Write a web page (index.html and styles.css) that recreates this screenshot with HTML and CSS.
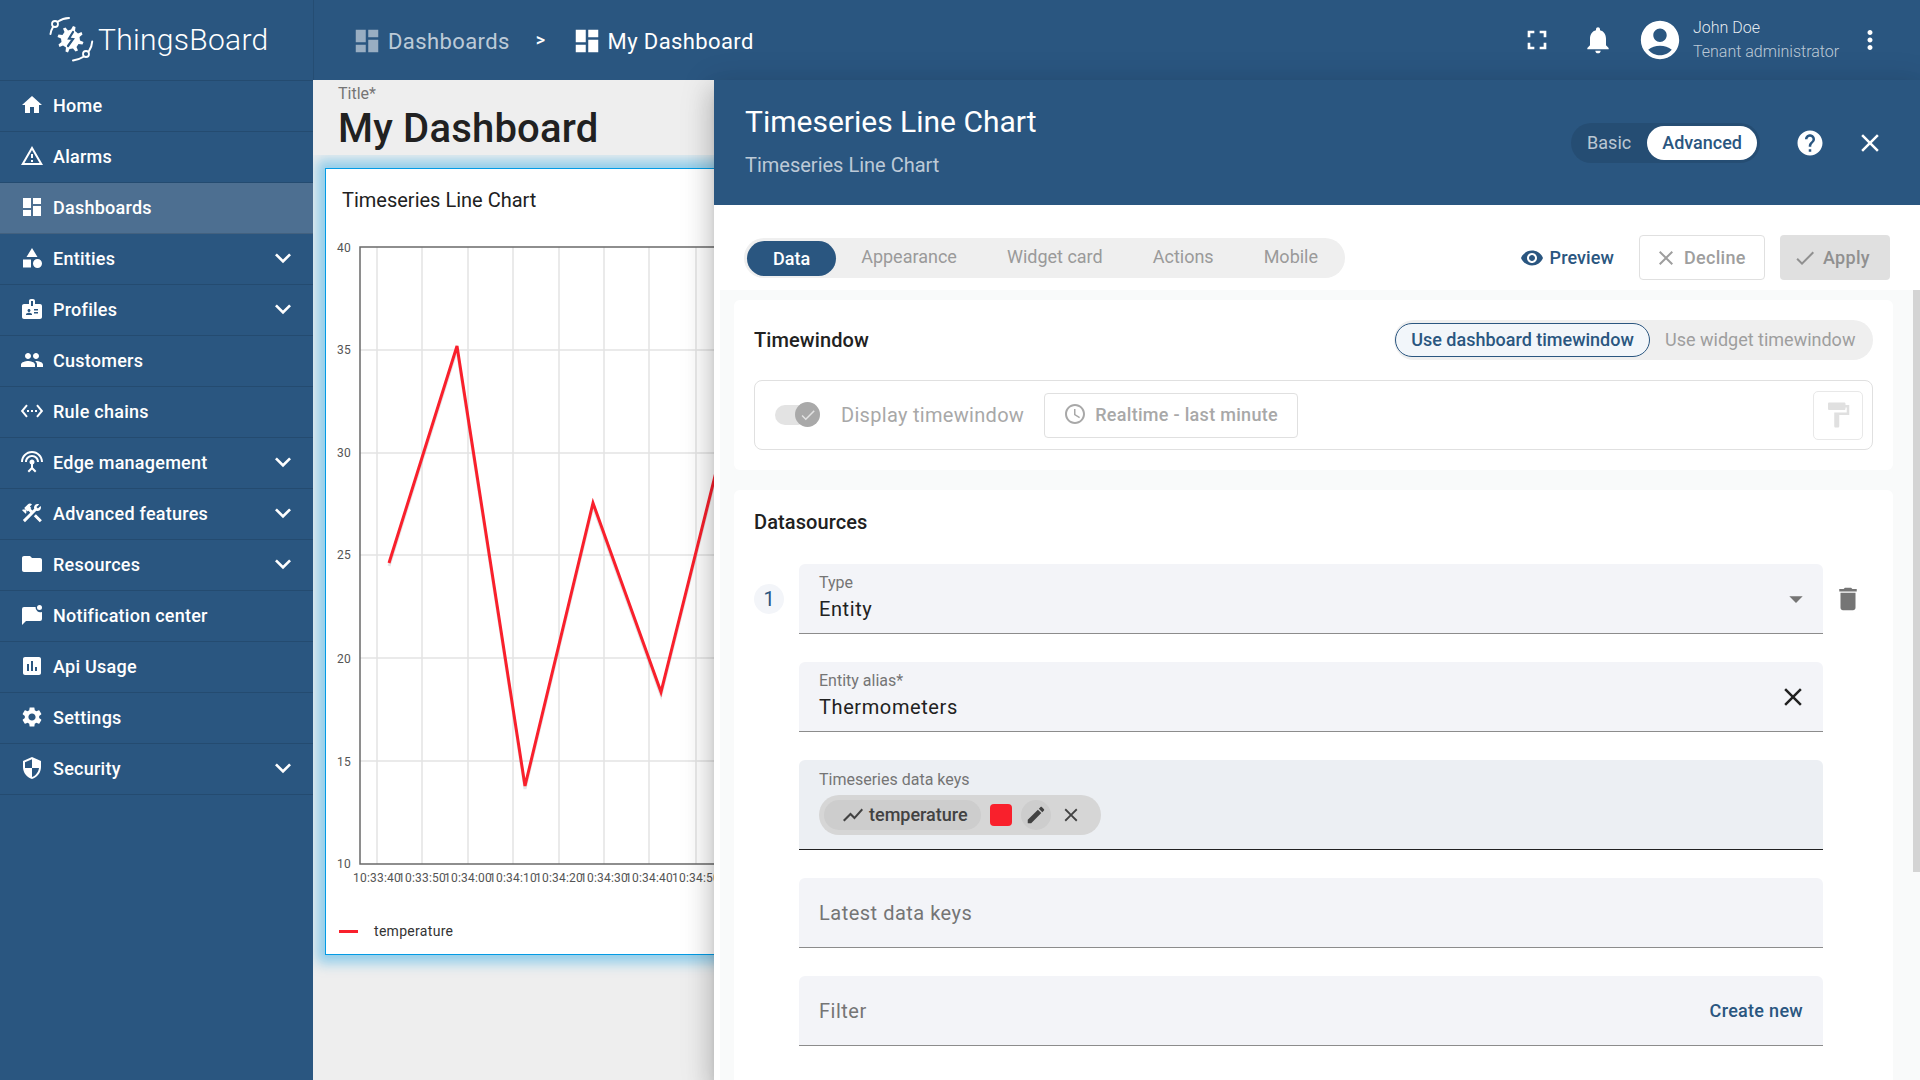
FILE: index.html
```html
<!DOCTYPE html>
<html lang="en">
<head>
  <meta charset="UTF-8" />
  <title>ThingsBoard | My Dashboard</title>
  <link rel="stylesheet" href="styles.css">
</head>
<body>

  <svg class="sprite" xmlns="http://www.w3.org/2000/svg">
    <symbol id="i-home" viewBox="0 0 24 24"><path d="M10 20v-6h4v6h5v-8h3L12 3 2 12h3v8z"/></symbol>
    <symbol id="i-warning" viewBox="0 0 24 24"><path d="M12 5.99L19.53 19H4.47L12 5.99M12 2L1 21h22L12 2zm1 14h-2v2h2v-2zm0-6h-2v4h2v-4z"/></symbol>
    <symbol id="i-dashboard" viewBox="0 0 24 24"><path d="M3 13h8V3H3v10zm0 8h8v-6H3v6zm10 0h8V11h-8v10zm0-18v6h8V3h-8z"/></symbol>
    <symbol id="i-category" viewBox="0 0 24 24"><path d="M12 2l-5.5 9h11zM17.5 13a4.5 4.5 0 1 0 0 9a4.5 4.5 0 1 0 0-9zM3 13.5h8v8H3z"/></symbol>
    <symbol id="i-badge" viewBox="0 0 24 24"><path d="M20 7h-5V4c0-1.1-.9-2-2-2h-2c-1.1 0-2 .9-2 2v3H4c-1.1 0-2 .9-2 2v11c0 1.1.9 2 2 2h16c1.1 0 2-.9 2-2V9c0-1.1-.9-2-2-2zM9 12c.83 0 1.5.67 1.5 1.5S9.83 15 9 15s-1.5-.67-1.5-1.5S8.17 12 9 12zm3 6H6v-.75c0-1 2-1.5 3-1.5s3 .5 3 1.5V18zm1-9h-2V4h2v5zm5 7.5h-4V15h4v1.5zm0-3h-4V12h4v1.5z"/></symbol>
    <symbol id="i-people" viewBox="0 0 24 24"><path d="M16 11c1.66 0 2.99-1.34 2.99-3S17.66 5 16 5c-1.66 0-3 1.34-3 3s1.34 3 3 3zm-8 0c1.66 0 2.99-1.34 2.99-3S9.66 5 8 5C6.34 5 5 6.34 5 8s1.34 3 3 3zm0 2c-2.33 0-7 1.17-7 3.5V19h14v-2.5c0-2.33-4.67-3.5-7-3.5zm8 0c-.29 0-.62.02-.97.05 1.16.84 1.97 1.97 1.97 3.45V19h6v-2.5c0-2.33-4.67-3.5-7-3.5z"/></symbol>
    <symbol id="i-ethernet" viewBox="0 0 24 24"><path d="M7.77 6.76L6.23 5.48.82 12l5.41 6.52 1.54-1.28L3.42 12l4.35-5.24zM7 13h2v-2H7v2zm10-2h-2v2h2v-2zm-6 2h2v-2h-2v2zm6.77-7.52l-1.54 1.28L20.58 12l-4.35 5.24 1.54 1.28L23.18 12l-5.41-6.52z"/></symbol>
    <symbol id="i-antenna" viewBox="0 0 24 24"><path d="M12 5c-3.87 0-7 3.13-7 7h2c0-2.76 2.24-5 5-5s5 2.24 5 5h2c0-3.87-3.13-7-7-7zm1 9.29c.88-.39 1.5-1.26 1.5-2.29 0-1.38-1.12-2.5-2.5-2.5S9.5 10.62 9.5 12c0 1.02.62 1.9 1.5 2.29v3.3L7.59 21 9 22.41l3-3 3 3L16.41 21 13 17.59v-3.3zM12 1C5.93 1 1 5.93 1 12h2c0-4.97 4.03-9 9-9s9 4.03 9 9h2c0-6.07-4.93-11-11-11z"/></symbol>
    <symbol id="i-construction" viewBox="0 0 24 24"><path d="M13.78 15.3l6 6 2.11-2.16-6-6zM17.5 10c1.93 0 3.5-1.57 3.5-3.5 0-.58-.16-1.12-.41-1.6l-2.7 2.7-1.49-1.49 2.7-2.7c-.48-.25-1.02-.41-1.6-.41-1.93 0-3.5 1.57-3.5 3.5 0 .41.08.8.21 1.16l-1.85 1.85-1.78-1.78.71-.71-1.41-1.41L12 3.49c-1.17-1.17-3.07-1.17-4.24 0L4.22 7.03l1.41 1.41H2.81l-.71.71 3.54 3.54.71-.71V9.15l1.41 1.41.71-.71 1.78 1.78-7.41 7.41 2.12 2.12L16.34 9.79c.36.13.75.21 1.16.21z"/></symbol>
    <symbol id="i-folder" viewBox="0 0 24 24"><path d="M10 4H4c-1.1 0-1.99.9-1.99 2L2 18c0 1.1.9 2 2 2h16c1.1 0 2-.9 2-2V8c0-1.1-.9-2-2-2h-8l-2-2z"/></symbol>
    <symbol id="i-message" viewBox="0 0 24 24"><path d="M15.6 4H4a2 2 0 0 0-2 2v16l4-4h14a2 2 0 0 0 2-2V8.9a4.6 4.6 0 0 1-6.4-4.9z"/><circle cx="19.5" cy="4.5" r="2.5"/></symbol>
    <symbol id="i-assessment" viewBox="0 0 24 24"><path d="M19 3H5c-1.1 0-2 .9-2 2v14c0 1.1.9 2 2 2h14c1.1 0 2-.9 2-2V5c0-1.1-.9-2-2-2zM9 17H7v-7h2v7zm4 0h-2V7h2v10zm4 0h-2v-4h2v4z"/></symbol>
    <symbol id="i-settings" viewBox="0 0 24 24"><path d="M19.14 12.94c.04-.3.06-.61.06-.94 0-.32-.02-.64-.07-.94l2.03-1.58c.18-.14.23-.41.12-.61l-1.92-3.32c-.12-.22-.37-.29-.59-.22l-2.39.96c-.5-.38-1.03-.7-1.62-.94l-.36-2.54c-.04-.24-.24-.41-.48-.41h-3.84c-.24 0-.43.17-.47.41l-.36 2.54c-.59.24-1.13.57-1.62.94l-2.39-.96c-.22-.08-.47 0-.59.22L2.74 8.87c-.12.21-.08.47.12.61l2.03 1.58c-.05.3-.09.63-.09.94s.02.64.07.94l-2.03 1.58c-.18.14-.23.41-.12.61l1.92 3.32c.12.22.37.29.59.22l2.39-.96c.5.38 1.03.7 1.62.94l.36 2.54c.05.24.24.41.48.41h3.84c.24 0 .44-.17.47-.41l.36-2.54c.59-.24 1.13-.56 1.62-.94l2.39.96c.22.08.47 0 .59-.22l1.92-3.32c.12-.22.07-.47-.12-.61l-2.01-1.58zM12 15.6c-1.98 0-3.6-1.62-3.6-3.6s1.62-3.6 3.6-3.6 3.6 1.62 3.6 3.6-1.62 3.6-3.6 3.6z"/></symbol>
    <symbol id="i-security" viewBox="0 0 24 24"><path d="M12 1L3 5v6c0 5.55 3.84 10.74 9 12 5.16-1.26 9-6.45 9-12V5l-9-4zm0 10.99h7c-.53 4.12-3.28 7.79-7 8.94V12H5V6.3l7-3.11v8.8z"/></symbol>
    <symbol id="i-expand" viewBox="0 0 24 24"><path d="M16.59 8.59L12 13.17 7.41 8.59 6 10l6 6 6-6z"/></symbol>
    <symbol id="i-fullscreen" viewBox="0 0 24 24"><path d="M7 14H5v5h5v-2H7v-3zm-2-4h2V7h3V5H5v5zm12 7h-3v2h5v-5h-2v3zM14 5v2h3v3h2V5h-5z"/></symbol>
    <symbol id="i-bell" viewBox="0 0 24 24"><path d="M12 22c1.1 0 2-.9 2-2h-4c0 1.1.89 2 2 2zm6-6v-5c0-3.07-1.64-5.64-4.5-6.32V4c0-.83-.67-1.5-1.5-1.5s-1.5.67-1.5 1.5v.68C7.63 5.36 6 7.92 6 11v5l-2 2v1h16v-1l-2-2z"/></symbol>
    <symbol id="i-account" viewBox="0 0 24 24"><path d="M12 2C6.48 2 2 6.48 2 12s4.48 10 10 10 10-4.48 10-10S17.52 2 12 2zm0 4c1.93 0 3.5 1.57 3.5 3.5S13.93 13 12 13s-3.5-1.57-3.5-3.5S10.07 6 12 6zm0 14c-2.03 0-4.43-.82-6.14-2.88C7.55 15.8 9.68 15 12 15s4.45.8 6.14 2.12C16.43 19.18 14.03 20 12 20z"/></symbol>
    <symbol id="i-more" viewBox="0 0 24 24"><path d="M12 8c1.1 0 2-.9 2-2s-.9-2-2-2-2 .9-2 2 .9 2 2 2zm0 2c-1.1 0-2 .9-2 2s.9 2 2 2 2-.9 2-2-.9-2-2-2zm0 6c-1.1 0-2 .9-2 2s.9 2 2 2 2-.9 2-2-.9-2-2-2z"/></symbol>
    <symbol id="i-help" viewBox="0 0 24 24"><path d="M12 2C6.48 2 2 6.48 2 12s4.48 10 10 10 10-4.48 10-10S17.52 2 12 2zm1 17h-2v-2h2v2zm2.07-7.75l-.9.92C13.45 12.9 13 13.5 13 15h-2v-.5c0-1.1.45-2.1 1.17-2.83l1.24-1.26c.37-.36.59-.86.59-1.41 0-1.1-.9-2-2-2s-2 .9-2 2H8c0-2.21 1.79-4 4-4s4 1.79 4 4c0 .88-.36 1.68-.93 2.25z"/></symbol>
    <symbol id="i-close" viewBox="0 0 24 24"><path d="M19 6.41L17.59 5 12 10.59 6.41 5 5 6.41 10.59 12 5 17.59 6.41 19 12 13.41 17.59 19 19 17.59 13.41 12z"/></symbol>
    <symbol id="i-eye" viewBox="0 0 24 24"><path d="M12 4.5C7 4.5 2.73 7.61 1 12c1.73 4.39 6 7.5 11 7.5s9.27-3.11 11-7.5c-1.73-4.39-6-7.5-11-7.5zM12 17c-2.76 0-5-2.24-5-5s2.24-5 5-5 5 2.24 5 5-2.24 5-5 5zm0-8c-1.66 0-3 1.34-3 3s1.34 3 3 3 3-1.34 3-3-1.34-3-3-3z"/></symbol>
    <symbol id="i-check" viewBox="0 0 24 24"><path d="M9 16.17L4.83 12l-1.42 1.41L9 19 21 7l-1.41-1.41z"/></symbol>
    <symbol id="i-clock" viewBox="0 0 24 24"><path d="M11.99 2C6.47 2 2 6.48 2 12s4.47 10 9.99 10C17.52 22 22 17.52 22 12S17.52 2 11.99 2zM12 20c-4.42 0-8-3.58-8-8s3.58-8 8-8 8 3.58 8 8-3.58 8-8 8zm.5-13H11v6l5.25 3.15.75-1.23-4.5-2.67z"/></symbol>
    <symbol id="i-paint" viewBox="0 0 24 24"><path d="M18 4V3c0-.55-.45-1-1-1H5c-.55 0-1 .45-1 1v4c0 .55.45 1 1 1h12c.55 0 1-.45 1-1V6h1v4H9v11c0 .55.45 1 1 1h2c.55 0 1-.45 1-1v-9h8V4h-3z"/></symbol>
    <symbol id="i-chart" viewBox="0 0 24 24"><path d="M3.5 18.49l6-6.01 4 4L22 6.92l-1.41-1.41-7.09 7.97-4-4L2 16.99z"/></symbol>
    <symbol id="i-edit" viewBox="0 0 24 24"><path d="M3 17.25V21h3.75L17.81 9.94l-3.75-3.75L3 17.25zM20.71 7.04c.39-.39.39-1.02 0-1.41l-2.34-2.34c-.39-.39-1.02-.39-1.41 0l-1.83 1.83 3.75 3.75 1.83-1.83z"/></symbol>
    <symbol id="i-delete" viewBox="0 0 24 24"><path d="M6 19c0 1.1.9 2 2 2h8c1.1 0 2-.9 2-2V7H6v12zM19 4h-3.5l-1-1h-5l-1 1H5v2h14V4z"/></symbol>
    <symbol id="i-drop" viewBox="0 0 24 24"><path d="M7 10l5 5 5-5z"/></symbol>
  </svg>

  <aside class="sidebar">
    <div class="logo">
      <svg class="logo-mark" viewBox="0 0 46 46" fill="none" stroke="#fff" stroke-linecap="round">
        <circle cx="7" cy="8" r="3" stroke-width="1.8"/>
        <path d="M10 5.5C13 3.5 17 2.2 21 2M5 11C3.5 13.5 2.8 15.5 2.5 18" stroke-width="2"/>
        <circle cx="38" cy="38" r="3" stroke-width="1.8"/>
        <path d="M35 41C32 43 29 44 25 44.5M41 35C43 32 44 29 44.2 25.5" stroke-width="2"/>
        <path d="M23 13.5l2-3.5 2.5 1 -.5 4 3 2.5 3.5-1.5 1 2.5-3 2.5 .5 3.5 3.5 1.5-1 2.5-4-.5-2 3 1.5 3.5-2.5 1-2.5-3-3.5.5-1.5 3.5-2.5-1 .5-4-3-2-3.5 1.5-1-2.5 3-2.5-.5-3.5-3.5-1.5 1-2.5 4 .5 2-3-1.5-3.5 2.5-1 2.5 3z" fill="#fff" stroke="none"/>
        <path d="M25 16l-4 6.5 4 .5-5 7" stroke="#2a5680" stroke-width="2.2"/>
      </svg>
      <span class="logo-text">ThingsBoard</span>
    </div>
    <nav class="menu">
      <a class="menu-item"><svg class="menu-icon"><use href="#i-home"/></svg>Home</a>
      <a class="menu-item"><svg class="menu-icon"><use href="#i-warning"/></svg>Alarms</a>
      <a class="menu-item active"><svg class="menu-icon"><use href="#i-dashboard"/></svg>Dashboards</a>
      <a class="menu-item"><svg class="menu-icon"><use href="#i-category"/></svg>Entities<svg class="menu-arrow"><use href="#i-expand"/></svg></a>
      <a class="menu-item"><svg class="menu-icon"><use href="#i-badge"/></svg>Profiles<svg class="menu-arrow"><use href="#i-expand"/></svg></a>
      <a class="menu-item"><svg class="menu-icon"><use href="#i-people"/></svg>Customers</a>
      <a class="menu-item"><svg class="menu-icon"><use href="#i-ethernet"/></svg>Rule chains</a>
      <a class="menu-item"><svg class="menu-icon"><use href="#i-antenna"/></svg>Edge management<svg class="menu-arrow"><use href="#i-expand"/></svg></a>
      <a class="menu-item"><svg class="menu-icon"><use href="#i-construction"/></svg>Advanced features<svg class="menu-arrow"><use href="#i-expand"/></svg></a>
      <a class="menu-item"><svg class="menu-icon"><use href="#i-folder"/></svg>Resources<svg class="menu-arrow"><use href="#i-expand"/></svg></a>
      <a class="menu-item"><svg class="menu-icon"><use href="#i-message"/></svg>Notification center</a>
      <a class="menu-item"><svg class="menu-icon"><use href="#i-assessment"/></svg>Api Usage</a>
      <a class="menu-item"><svg class="menu-icon"><use href="#i-settings"/></svg>Settings</a>
      <a class="menu-item"><svg class="menu-icon"><use href="#i-security"/></svg>Security<svg class="menu-arrow"><use href="#i-expand"/></svg></a>
    </nav>
  </aside>

  <div class="page">
    <header class="topbar">
      <div class="crumbs">
        <span class="crumb muted"><svg class="crumb-icon"><use href="#i-dashboard"/></svg>Dashboards</span>
        <span class="crumb-sep">&gt;</span>
        <span class="crumb"><svg class="crumb-icon"><use href="#i-dashboard"/></svg>My Dashboard</span>
      </div>
      <div class="top-actions">
        <svg class="top-icon fs"><use href="#i-fullscreen"/></svg>
        <svg class="top-icon bell"><use href="#i-bell"/></svg>
        <svg class="avatar"><use href="#i-account"/></svg>
        <div class="user">
          <div class="user-name">John Doe</div>
          <div class="user-role">Tenant administrator</div>
        </div>
        <svg class="top-icon more"><use href="#i-more"/></svg>
      </div>
    </header>

    <main class="dash">
      <div class="dash-title">
        <div class="dash-label">Title*</div>
        <h1>My Dashboard</h1>
      </div>
      <section class="widget">
        <h2>Timeseries Line Chart</h2>
        <svg class="chart" width="680" height="706" viewBox="325 218 680 706">
          <g class="grid">
            <path d="M377 247V864M422 247V864M468 247V864M513 247V864M559 247V864M604 247V864M649 247V864M696 247V864M741 247V864"/>
            <path d="M360 350H1000M360 453H1000M360 555H1000M360 658H1000M360 761H1000"/>
          </g>
          <path class="axis" d="M1000 247H360V864H1000"/>
          <g class="tick-y">
            <text x="351" y="252">40</text>
            <text x="351" y="354">35</text>
            <text x="351" y="457">30</text>
            <text x="351" y="559">25</text>
            <text x="351" y="663">20</text>
            <text x="351" y="766">15</text>
            <text x="351" y="868">10</text>
          </g>
          <g class="tick-x">
            <text x="377" y="882">10:33:40</text>
            <text x="422" y="882">10:33:50</text>
            <text x="468" y="882">10:34:00</text>
            <text x="513" y="882">10:34:10</text>
            <text x="559" y="882">10:34:20</text>
            <text x="604" y="882">10:34:30</text>
            <text x="649" y="882">10:34:40</text>
            <text x="696" y="882">10:34:50</text>
          </g>
          <polyline class="line-shadow" points="389,563 457,346 525,786 593,503 661,692 729,420"/>
          <polyline class="line" points="389,563 457,346 525,786 593,503 661,692 729,420"/>
        </svg>
        <div class="legend"><i class="legend-mark"></i>temperature</div>
      </section>
    </main>
  </div>

  <div class="drawer">
    <div class="drawer-head">
      <div class="drawer-titles">
        <div class="drawer-title">Timeseries Line Chart</div>
        <div class="drawer-sub">Timeseries Line Chart</div>
      </div>
      <div class="mode">
        <span class="mode-opt">Basic</span>
        <span class="mode-opt on">Advanced</span>
      </div>
      <svg class="head-icon help"><use href="#i-help"/></svg>
      <svg class="head-icon shut"><use href="#i-close"/></svg>
    </div>

    <div class="toolbar">
      <div class="tabs">
        <span class="tab on">Data</span>
        <span class="tab">Appearance</span>
        <span class="tab">Widget card</span>
        <span class="tab">Actions</span>
        <span class="tab">Mobile</span>
      </div>
      <div class="tool-actions">
        <button class="btn link"><svg class="btn-icon"><use href="#i-eye"/></svg>Preview</button>
        <button class="btn stroked"><svg class="btn-icon"><use href="#i-close"/></svg>Decline</button>
        <button class="btn flat"><svg class="btn-icon"><use href="#i-check"/></svg>Apply</button>
      </div>
    </div>

    <div class="settings">
      <section class="card tw-card">
        <div class="card-row">
          <h3>Timewindow</h3>
          <div class="seg">
            <span class="seg-opt on">Use dashboard timewindow</span>
            <span class="seg-opt">Use widget timewindow</span>
          </div>
        </div>
        <div class="tw-box">
          <span class="toggle"><span class="knob"><svg><use href="#i-check"/></svg></span></span>
          <span class="tw-label">Display timewindow</span>
          <button class="tw-btn"><svg><use href="#i-clock"/></svg>Realtime - last minute</button>
          <span class="paint"><svg><use href="#i-paint"/></svg></span>
        </div>
      </section>

      <section class="card ds-card">
        <h3>Datasources</h3>
        <div class="ds-row">
          <div class="ds-num">1</div>
          <div class="ds-fields">
            <div class="field">
              <div class="field-main">
                <div class="field-label">Type</div>
                <div class="field-value">Entity</div>
              </div>
              <svg class="field-drop"><use href="#i-drop"/></svg>
            </div>
            <div class="field">
              <div class="field-main">
                <div class="field-label">Entity alias*</div>
                <div class="field-value">Thermometers</div>
              </div>
              <svg class="field-clear"><use href="#i-close"/></svg>
            </div>
            <div class="field keys">
              <div class="field-main">
                <div class="field-label">Timeseries data keys</div>
                <div class="chip">
                  <span class="chip-name"><svg><use href="#i-chart"/></svg>temperature</span>
                  <span class="chip-color"></span>
                  <span class="chip-edit"><svg><use href="#i-edit"/></svg></span>
                  <svg class="chip-close"><use href="#i-close"/></svg>
                </div>
              </div>
            </div>
            <div class="field plain"><span class="field-hint">Latest data keys</span></div>
            <div class="field plain"><span class="field-hint">Filter</span><a class="create">Create new</a></div>
          </div>
          <svg class="ds-trash"><use href="#i-delete"/></svg>
        </div>
      </section>
    </div>

    <div class="scroll-thumb"></div>
  </div>

</body>
</html>
```

FILE: styles.css
```css
:root {
  --primary: #2a5680;
  --muted: #a8a8a8;
  --line: #e0e0e0;
}

* { box-sizing: border-box; margin: 0; padding: 0; }

html, body { height: 100%; }

body {
  font-family: Roboto, sans-serif;
  display: flex;
  overflow: hidden;
  background: #eee;
  color: #212121;
}

.sprite { display: none; }

svg { fill: currentColor; flex: none; }

/* sidebar */
.sidebar {
  width: 313px;
  height: 100vh;
  flex: none;
  background: var(--primary);
  color: #fff;
}

.logo {
  height: 81px;
  display: flex;
  align-items: center;
  padding: 0 0 2px 48px;
  gap: 4px;
  border-bottom: 1px solid rgba(0, 0, 0, 0.12);
}

.logo-mark { width: 46px; height: 46px; fill: none; }

.logo-text { font-size: 30px; font-weight: 300; letter-spacing: 0.3px; }

.menu-item {
  height: 51px;
  display: flex;
  align-items: center;
  padding: 0 0 2px 20px;
  font-size: 18px;
  font-weight: 500;
  letter-spacing: 0.25px;
  border-bottom: 1px solid rgba(0, 0, 0, 0.12);
}

.menu-item.active { background: #4d6f91; }

.menu-icon { width: 24px; height: 24px; margin-right: 9px; }

.menu-arrow { width: 32px; height: 32px; margin-left: auto; margin-right: 14px; }

/* top bar */
.page {
  flex: 1;
  min-width: 0;
  display: flex;
  flex-direction: column;
  height: 100vh;
}

.topbar {
  height: 80px;
  flex: none;
  display: flex;
  align-items: center;
  justify-content: space-between;
  background: var(--primary);
  color: #fff;
  box-shadow: inset 1px 0 0 rgba(0, 0, 0, 0.1);
  padding: 0 35px 0 39px;
}

.crumbs { display: flex; align-items: center; font-size: 22px; letter-spacing: 0.4px; padding-top: 2px; }

.crumb { display: flex; align-items: center; gap: 6px; }

.crumb.muted { color: rgba(255, 255, 255, 0.7); }

.crumb.muted svg { opacity: 0.75; }

.crumb-icon { width: 30px; height: 30px; }

.crumb-sep { margin: -4px 26px 0 26px; font-size: 18px; font-weight: 500; }

.top-actions { display: flex; align-items: center; }

.top-icon { width: 30px; height: 30px; }

.top-icon.fs { width: 32px; height: 32px; margin-right: 29px; }

.top-icon.bell { width: 32px; height: 32px; margin-right: 23px; }

.avatar { width: 46px; height: 46px; margin-right: 10px; }

.user { width: 163px; font-weight: 300; font-size: 16px; line-height: 24px; }

.user-name { color: rgba(255, 255, 255, 0.9); }

.user-role { color: rgba(255, 255, 255, 0.7); }

.top-icon.more { margin-left: -1px; }

/* dashboard behind the drawer */
.dash {
  flex: 1;
  position: relative;
  overflow: hidden;
  padding: 0 0 0 12px;
}

.dash-title {
  position: relative;
  z-index: 1;
  height: 75px;
  margin-left: -12px;
  padding: 1px 0 0 25px;
  background: #eee;
}

.dash-label { font-size: 16px; line-height: 26px; color: #757575; }

h1 { font-size: 40px; font-weight: 500; line-height: 44px; letter-spacing: 0.2px; color: #212121; }

.widget {
  width: 1000px;
  height: 787px;
  margin-top: 13px;
  padding: 19px 0 0 16px;
  background: #fff;
  border: 1px solid #039be5;
  box-shadow: 0 0 12px 8px rgba(3, 155, 229, 0.4);
}

.widget h2 { font-size: 20px; font-weight: 400; line-height: 24px; }

.chart { display: block; margin: 6px 0 0 -17px; fill: none; }

.grid path { stroke: #e3e3e3; stroke-width: 1.5; fill: none; }

.axis { stroke: #6a6a6a; stroke-width: 1.5; fill: none; }

.tick-y text, .tick-x text { font-size: 12px; letter-spacing: 0.2px; fill: #545454; }

.tick-y text { text-anchor: end; }

.tick-x text { text-anchor: middle; }

.line { fill: none; stroke: #f9202c; stroke-width: 3; }

.line-shadow { fill: none; stroke: rgba(0, 0, 0, 0.1); stroke-width: 3; transform: translateY(3px); }

.legend {
  display: flex;
  align-items: center;
  font-size: 14px;
  letter-spacing: 0.3px;
  color: #333;
  margin-top: -1px;
}

.legend-mark {
  width: 19px;
  height: 3px;
  background: #f9202c;
  margin: 0 16px 0 -3px;
}

/* drawer */
.drawer {
  position: absolute;
  z-index: 2;
  top: 80px;
  left: 714px;
  right: 0;
  bottom: 0;
  display: flex;
  flex-direction: column;
  background: #fff;
  box-shadow: 0 8px 10px -5px rgba(0, 0, 0, 0.2), 0 16px 24px 2px rgba(0, 0, 0, 0.14), 0 6px 30px 5px rgba(0, 0, 0, 0.12);
  overflow: hidden;
}

.drawer-head {
  height: 125px;
  flex: none;
  display: flex;
  align-items: center;
  background: var(--primary);
  color: #fff;
  padding: 0 35px 0 31px;
}

.drawer-titles { flex: 1; }

.drawer-title { font-size: 30px; line-height: 36px; margin-top: -3px; }

.drawer-sub { font-size: 20px; line-height: 28px; margin-top: 11px; color: rgba(255, 255, 255, 0.7); }

.mode {
  display: flex;
  align-items: center;
  height: 40px;
  padding: 0 3px 0 16px;
  border-radius: 20px;
  background: rgba(0, 0, 0, 0.1);
  margin-right: 35px;
  font-size: 18px;
}

.mode-opt { color: rgba(255, 255, 255, 0.7); margin-right: 16px; }

.mode-opt.on {
  margin: 0;
  height: 34px;
  line-height: 34px;
  padding: 0 15px;
  border-radius: 17px;
  background: #fff;
  color: var(--primary);
  font-weight: 500;
}

.head-icon { width: 30px; height: 30px; }

.head-icon.help { margin-right: 30px; }

.toolbar {
  height: 85px;
  flex: none;
  display: flex;
  justify-content: space-between;
  align-items: flex-start;
  padding: 30px 30px 0;
}

.tabs {
  display: flex;
  align-items: center;
  height: 40px;
  margin-top: 3px;
  padding: 0 3px;
  border-radius: 20px;
  background: #efefef;
  font-size: 18px;
  color: #9a9a9a;
  width: 601px;
  white-space: nowrap;
}

.tab { padding: 0 25px 4px; }

.tab.on {
  height: 35px;
  line-height: 35px;
  padding: 0 26px;
  border-radius: 18px;
  background: var(--primary);
  color: #fff;
  font-weight: 500;
}

.tool-actions { display: flex; align-items: center; }

.btn {
  display: flex;
  align-items: center;
  height: 45px;
  border-radius: 4px;
  border: 1px solid transparent;
  background: none;
  font: 500 18px Roboto, sans-serif;
  letter-spacing: 0.3px;
}

.btn-icon { width: 24px; height: 24px; margin-right: 6px; }

.btn.link { color: var(--primary); margin-right: 24px; letter-spacing: 0.1px; }

.btn.stroked { color: #9e9e9e; border-color: var(--line); width: 126px; padding-left: 14px; margin-right: 15px; }

.btn.flat { color: #909090; background: #e0e0e0; width: 110px; padding-left: 12px; }

/* settings */
.settings {
  flex: 1;
  margin-left: 6px;
  padding: 10px 27px 0 14px;
  background: #f9fafa;
  min-height: 0;
  overflow: hidden;
}

.card { background: #fff; border-radius: 6px; padding: 0 20px; }

h3 { font-size: 20px; font-weight: 500; line-height: 22px; letter-spacing: 0.1px; }

.tw-card { height: 170px; padding-top: 20px; margin-bottom: 20px; }

.card-row { display: flex; align-items: center; justify-content: space-between; height: 40px; }

.seg {
  display: flex;
  align-items: center;
  height: 40px;
  border-radius: 20px;
  background: #efefef;
  font-size: 18px;
  color: #9e9e9e;
  padding-left: 1px;
  width: 479px;
}

.seg-opt { padding: 0 0 2px 15px; }

.seg-opt.on {
  height: 34px;
  line-height: 32px;
  width: 255px;
  padding: 0;
  text-align: center;
  border: 1.5px solid var(--primary);
  border-radius: 17px;
  background: #f2f6fa;
  color: var(--primary);
  font-weight: 500;
}

.tw-box {
  display: flex;
  align-items: center;
  height: 70px;
  margin-top: 20px;
  padding-left: 20px;
  border: 1px solid var(--line);
  border-radius: 8px;
}

.toggle {
  position: relative;
  width: 33px;
  height: 20px;
  border-radius: 10px;
  background: #e3e3e3;
}

.knob {
  position: absolute;
  left: 20px;
  top: -3px;
  width: 25px;
  height: 25px;
  border-radius: 50%;
  background: #a9a9a9;
  color: #e3e3e3;
  display: flex;
  align-items: center;
  justify-content: center;
}

.knob svg { width: 18px; height: 18px; }

.tw-label { margin-left: 33px; font-size: 20px; letter-spacing: 0.3px; color: var(--muted); }

.tw-btn {
  display: flex;
  align-items: center;
  height: 45px;
  width: 254px;
  margin-left: 20px;
  padding: 0 0 2px 18px;
  background: none;
  border: 1px solid var(--line);
  border-radius: 4px;
  color: var(--muted);
  font: 500 18px Roboto, sans-serif;
  letter-spacing: 0.3px;
}

.tw-btn svg { width: 24px; height: 24px; margin-right: 8px; }

.paint {
  margin-left: auto;
  margin-right: 9px;
  width: 50px;
  height: 49px;
  display: flex;
  align-items: center;
  justify-content: center;
  border: 1px solid #e8e8e8;
  border-radius: 5px;
  color: #e0e0e0;
}

.paint svg { width: 30px; height: 30px; }

.ds-card { padding-top: 21px; height: 700px; }

.ds-row { display: flex; margin-top: 31px; }

.ds-num {
  width: 30px;
  height: 30px;
  margin: 20px 15px 0 0;
  border-radius: 50%;
  background: #f3f5f9;
  color: var(--primary);
  font-size: 20px;
  line-height: 30px;
  text-align: center;
  flex: none;
}

.ds-fields { width: 1024px; display: flex; flex-direction: column; gap: 28px; }

.field {
  display: flex;
  align-items: center;
  min-height: 70px;
  padding: 0 20px;
  background: #f3f4f8;
  border-bottom: 1px solid #8c8c8c;
  border-radius: 6px 6px 0 0;
}

.field.keys { height: 90px; background: #eceff3; border-bottom-color: #212121; align-items: flex-start; }

.field-main { flex: 1; margin-bottom: 1px; }

.field-label { font-size: 16px; line-height: 18px; color: #757575; }

.field-value { font-size: 20px; line-height: 26px; margin-top: 4px; letter-spacing: 0.6px; }

.field.keys .field-main { padding-top: 11px; }

.field-drop { width: 32px; height: 32px; color: #757575; margin-right: -9px; }

.field-clear { width: 30px; height: 30px; margin-right: -5px; }

.chip {
  display: flex;
  align-items: center;
  width: 282px;
  height: 40px;
  margin-top: 6px;
  padding-left: 5px;
  border-radius: 20px;
  background: #d6d6d6;
}

.chip-name {
  display: flex;
  align-items: center;
  width: 157px;
  height: 30px;
  padding: 0 0 1px 17px;
  border-radius: 15px;
  background: #cdcdcd;
  font-size: 18px;
  font-weight: 500;
  color: #424242;
}

.chip-name svg { width: 24px; height: 24px; margin-right: 4px; }

.chip-color {
  width: 22px;
  height: 22px;
  margin-left: 9px;
  border-radius: 4px;
  background: #f9202c;
}

.chip-edit {
  width: 30px;
  height: 30px;
  margin-left: 9px;
  border-radius: 50%;
  background: #cdcdcd;
  color: #424242;
  display: flex;
  align-items: center;
  justify-content: center;
}

.chip-edit svg { width: 22px; height: 22px; }

.chip-close { width: 22px; height: 22px; margin-left: 9px; color: #424242; }

.field-hint { font-size: 20px; color: #757575; letter-spacing: 0.5px; flex: 1; }

.create { font-size: 18px; font-weight: 500; color: var(--primary); letter-spacing: 0.3px; }

.ds-trash { width: 30px; height: 30px; margin: 20px 0 0 10px; color: #757575; }

.scroll-thumb {
  position: absolute;
  top: 210px;
  right: 0;
  width: 7px;
  height: 582px;
  background: #d4d4d4;
}
```
